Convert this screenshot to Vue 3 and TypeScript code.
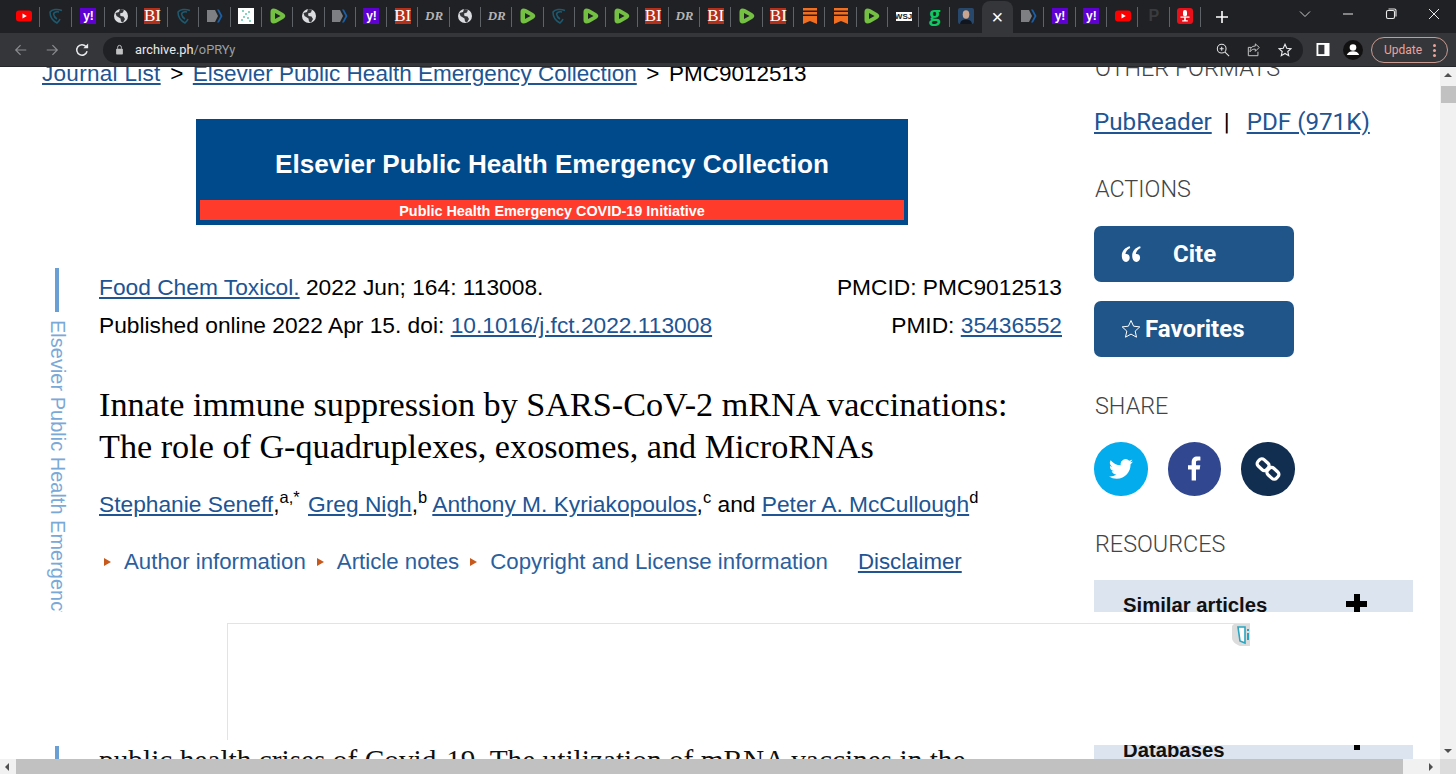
<script setup lang="ts">
type TabKind = 'yt' | 'shield' | 'yahoo' | 'globe' | 'bi' | 'doc' | 'dots' | 'rumble' | 'dr' | 'ribbon' | 'wsj' | 'g' | 'face' | 'active' | 'p' | 'mic'

const tabs: TabKind[] = [
  'yt', 'shield', 'yahoo', 'globe', 'bi', 'shield', 'doc', 'dots', 'rumble', 'globe', 'doc', 'yahoo', 'bi', 'dr', 'globe', 'dr',
  'rumble', 'shield', 'rumble', 'rumble', 'bi', 'dr', 'bi', 'rumble', 'bi', 'ribbon', 'ribbon', 'rumble', 'wsj', 'g', 'face', 'active',
  'doc', 'yahoo', 'yahoo', 'yt', 'p', 'mic'
]

const authors = [
  { name: 'Stephanie Seneff', sup: 'a,*', sep: ',' },
  { name: 'Greg Nigh', sup: 'b', sep: ',' },
  { name: 'Anthony M. Kyriakopoulos', sup: 'c', sep: ',' }
]

const infoLinks = ['Author information', 'Article notes', 'Copyright and License information']
</script>

<template>
  <div class="browser">
    <header class="tabbar">
      <div
        v-for="(tab, i) in tabs"
        :key="i"
        class="tab"
        :class="{ active: tab === 'active', nosep: tab === 'active' || tabs[i + 1] === 'active' }"
      >
        <svg v-if="tab === 'yt'" class="ico" viewBox="0 0 16 16"><rect x="0" y="2.500" width="16" height="11" rx="3" fill="#f00" /><path d="M6.500 5.600 10.800 8l-4.300 2.400z" fill="#fff" /></svg>
        <svg v-else-if="tab === 'shield'" class="ico" viewBox="0 0 16 16" fill="none" stroke="#1d5a70" stroke-width="1.500"><path d="M14 2.500C9 .5 4 1.500 2 4c0 5 2 8.500 7 11 1-1 2.500-2.500 3-4" /><path d="M11 4C8 3.500 6 4.500 5.500 6c.5 2.500 1.500 4 3.500 5" /></svg>
        <span v-else-if="tab === 'yahoo'" class="fav yahoo">y!</span>
        <svg v-else-if="tab === 'globe'" class="ico" viewBox="0 0 16 16"><circle cx="8" cy="8" r="7" fill="#dadce0" /><path d="M2.500 5 6 4l1-3 4 .5-1 3-3 1 .5 2.500 3 .5 1.500 2.500-2 3.500-2-1-.5-3L3.500 8z" fill="#35363a" /></svg>
        <span v-else-if="tab === 'bi'" class="fav bi">BI</span>
        <svg v-else-if="tab === 'doc'" class="ico wide" viewBox="0 0 16 16"><path d="M0 2h8l3 6-3 6H0z" fill="#7d7f83" /><path d="M10 1.500h2l3.500 6.500-3.500 6.500h-2L13.500 8z" fill="#1a5fa8" /></svg>
        <svg v-else-if="tab === 'dots'" class="ico" viewBox="0 0 16 16"><rect width="16" height="16" fill="#fff" /><g fill="#62c6a8"><circle cx="5" cy="3" r="1" /><circle cx="8" cy="6" r="1" /><circle cx="11" cy="4" r="1" /><circle cx="6" cy="9" r="1" /><circle cx="10" cy="10" r="1" /><circle cx="12" cy="13" r="1" /><circle cx="4" cy="12" r="1" /></g></svg>
        <svg v-else-if="tab === 'rumble'" class="ico" viewBox="0 0 16 16"><path d="M3.500 0.500C1.500.5 0.500 2 0.500 4v8c0 2 1 3.500 3 3.500 1 0 2-.3 3-.8l6.500-3.700c3-1.800 3-4.200 0-6L6.500 1.300C5.500.8 4.500.5 3.500.5z" fill="#74c043" /><path d="M5 5l5.500 3L5 11z" fill="#202124" /></svg>
        <span v-else-if="tab === 'dr'" class="fav dr">DR</span>
        <svg v-else-if="tab === 'ribbon'" class="ico" viewBox="0 0 16 16"><path d="M1 0h14v2.500H1zM1 4h14v2.500H1zM1 8h14v8l-7-3-7 3z" fill="#f26f21" /></svg>
        <span v-else-if="tab === 'wsj'" class="fav wsj">WSJ</span>
        <span v-else-if="tab === 'g'" class="fav gg">g</span>
        <svg v-else-if="tab === 'face'" class="ico" viewBox="0 0 16 16"><rect width="16" height="16" rx="2" fill="#27476b" /><ellipse cx="8" cy="6.500" rx="3.300" ry="4.200" fill="#c9a58f" /><path d="M2 16c.5-3.500 3-4.500 6-4.500s5.500 1 6 4.500z" fill="#10161f" /></svg>
        <span v-else-if="tab === 'active'" class="close">×</span>
        <span v-else-if="tab === 'p'" class="fav pp">P</span>
        <svg v-else-if="tab === 'mic'" class="ico" viewBox="0 0 16 16"><rect width="16" height="16" rx="3" fill="#e8101a" /><rect x="6" y="2" width="4" height="6.500" rx="2" fill="#fff" /><path d="M3.500 8.500h9v1.200h-3.700v2.500h2v1.200h-5.600v-1.200h2V9.700H3.500z" fill="#fff" /></svg>
      </div>
      <svg class="plus" viewBox="0 0 12 12" fill="none" stroke="#fff" stroke-width="1.600"><path d="M6 0v12M0 6h12" /></svg>
      <div class="win-controls">
        <svg viewBox="0 0 12 12" fill="none" stroke="#c8c9cb" stroke-width="1"><path d="M1 3.500 6 8.500l5-5" /></svg>
        <svg viewBox="0 0 12 12" fill="none" stroke="#e8e8e8" stroke-width="1"><path d="M1 6h10" /></svg>
        <svg viewBox="0 0 12 12" fill="none" stroke="#e8e8e8" stroke-width="1.100"><rect x="1.500" y="2.500" width="8" height="8" rx="1.500" /><path d="M3.500 1h6a1.500 1.500 0 0 1 1.500 1.500v6" /></svg>
        <svg viewBox="0 0 12 12" fill="none" stroke="#e8e8e8" stroke-width="1"><path d="M1 1l10 10M11 1 1 11" /></svg>
      </div>
    </header>

    <div class="toolbar">
      <svg class="nav" viewBox="0 0 16 16" fill="none" stroke="#8a8c8f" stroke-width="1.400"><path d="M14 8H2M7.500 2.500 2 8l5.500 5.500" /></svg>
      <svg class="nav" viewBox="0 0 16 16" fill="none" stroke="#8a8c8f" stroke-width="1.400"><path d="M2 8h12M8.500 2.500 14 8l-5.500 5.500" /></svg>
      <svg class="nav" viewBox="0 0 16 16" fill="none" stroke="#e8eaed" stroke-width="1.700"><path d="M13.800 9.500A6 6 0 1 1 12.500 4" /><path d="M15 .5v5.500H9.500" fill="#e8eaed" stroke="none" /></svg>
      <div class="omnibox">
        <svg class="lock" viewBox="0 0 12 14"><path d="M3.500 6V4a2.500 2.500 0 0 1 5 0v2" fill="none" stroke="#c0c1c3" stroke-width="1.300" /><rect x="1.500" y="6" width="9" height="7.500" rx="1" fill="#c0c1c3" /></svg>
        <span class="url">archive.ph<span class="url-path">/oPRYy</span></span>
        <span class="spacer"></span>
        <svg class="omni-ico" viewBox="0 0 16 16" fill="none" stroke="#e0e1e3" stroke-width="1.200"><circle cx="6.500" cy="6.500" r="5" /><path d="M10.300 10.300 15 15M6.500 4.200v4.600M4.200 6.500h4.600" /></svg>
        <svg class="omni-ico" viewBox="0 0 16 16" fill="none" stroke="#c9cacc" stroke-width="1.100"><path d="M14 5 9.500 1v2.500C5 3.500 3.500 6.500 3.500 10c1.500-2.500 3.500-3 6-3v2.500z" /><path d="M5 5H1.500v9.500h11V10" /></svg>
        <svg class="omni-ico" viewBox="0 0 16 16" fill="none" stroke="#e8eaed" stroke-width="1.300"><path d="m8 1.500 2 4.500 4.800.5-3.600 3.200 1 4.800L8 12l-4.200 2.500 1-4.800L1.200 6.500 6 6z" /></svg>
      </div>
      <svg class="panel" viewBox="0 0 14 14"><rect width="14" height="14" fill="#fff" /><rect x="2" y="2" width="6.500" height="10" fill="#35363a" /></svg>
      <svg class="avatar" viewBox="0 0 20 20"><circle cx="10" cy="10" r="10" fill="#111" /><circle cx="10" cy="7.500" r="3.300" fill="#fff" /><path d="M3.800 15c1-3 3.500-3.800 6.200-3.800s5.200.8 6.200 3.800z" fill="#fff" /></svg>
      <div class="update">
        <span>Update</span>
        <i></i>
      </div>
    </div>

    <div class="page">
      <main class="viewport">
        <div class="content">
          <nav class="crumbs">
            <a class="first">Journal List</a><span class="gt">&gt;</span><a>Elsevier Public Health Emergency Collection</a><span class="gt">&gt;</span><span>PMC9012513</span>
          </nav>
          <div class="banner">
            <h2>Elsevier Public Health Emergency Collection</h2>
            <p>Public Health Emergency COVID-19 Initiative</p>
          </div>
          <div class="article-row">
            <aside class="rail">
              <span class="rail-bar"></span>
              <span class="rail-text">Elsevier Public Health Emergency Collection</span>
              <span class="rail-bar"></span>
            </aside>
            <article class="article">
              <div class="cite-row">
                <div><a>Food Chem Toxicol.</a> 2022 Jun; 164: 113008.</div>
                <div>PMCID: PMC9012513</div>
              </div>
              <div class="cite-row second">
                <div>Published online 2022 Apr 15. doi: <a>10.1016/j.fct.2022.113008</a></div>
                <div>PMID: <a>35436552</a></div>
              </div>
              <h1>Innate immune suppression by SARS-CoV-2 mRNA vaccinations:<br />The role of G-quadruplexes, exosomes, and MicroRNAs</h1>
              <div class="authors">
                <template v-for="a in authors" :key="a.name">
                  <a>{{ a.name }}</a>{{ a.sep }}<sup>{{ a.sup }}</sup>{{ ' ' }}
                </template>
                and <a>Peter A. McCullough</a><sup>d</sup>
              </div>
              <div class="info">
                <span v-for="item in infoLinks" :key="item" class="info-item"><i class="tri"></i>{{ item }}</span>
                <a class="disclaimer">Disclaimer</a>
              </div>
              <p class="abstract">public health crises of Covid-19. The utilization of mRNA vaccines in the</p>
            </article>
          </div>
        </div>

        <aside class="side">
          <h3 class="other">OTHER FORMATS</h3>
          <div class="formats"><a>PubReader</a><span class="pipe">|</span><a>PDF (971K)</a></div>
          <h3 class="actions">ACTIONS</h3>
          <button class="btn cite">
            <svg viewBox="0 0 20 16" preserveAspectRatio="none" fill="#fff"><path d="M8.800 1C4 2.300 .8 5 .8 9.600c0 3.200 1.700 5.400 4.300 5.400 2.200 0 3.600-1.600 3.600-3.600 0-2.100-1.400-3.500-3.300-3.500-.4 0-.8.100-1 .2.300-2.300 2.200-4.300 4.800-5.400zM19.200 1c-4.800 1.300-8 4-8 8.600 0 3.200 1.700 5.400 4.300 5.400 2.200 0 3.600-1.600 3.600-3.600 0-2.100-1.400-3.500-3.300-3.500-.4 0-.8.100-1 .2.300-2.300 2.200-4.300 4.800-5.400z" /></svg>
            <span>Cite</span>
          </button>
          <button class="btn fav-btn">
            <svg viewBox="0 0 20 20" fill="none" stroke="#fff" stroke-width="1"><path d="m10 1.500 2.600 5.700 6.200.7-4.600 4.200 1.300 6.100L10 15.100l-5.500 3.100 1.300-6.100L1.200 7.900l6.200-.7z" /></svg>
            <span>Favorites</span>
          </button>
          <h3 class="share">SHARE</h3>
          <div class="share-row">
            <span class="circle tw">
              <svg viewBox="0 0 24 24" fill="#fff"><path d="M23.950 4.570a10 10 0 0 1-2.830.77 4.960 4.960 0 0 0 2.160-2.720 9.900 9.900 0 0 1-3.130 1.190 4.920 4.920 0 0 0-8.390 4.490A14 14 0 0 1 1.670 3.150a4.920 4.920 0 0 0 1.520 6.570 4.900 4.900 0 0 1-2.230-.61v.06a4.920 4.920 0 0 0 3.950 4.830 5 5 0 0 1-2.220.08 4.940 4.940 0 0 0 4.600 3.420A9.870 9.870 0 0 1 0 19.540a13.940 13.940 0 0 0 7.550 2.210c9.050 0 14-7.500 14-13.980 0-.21 0-.42-.02-.63a9.940 9.940 0 0 0 2.420-2.570z" /></svg>
            </span>
            <span class="circle fb">
              <svg viewBox="0 0 14 24" fill="#fff"><path d="M9 24V13h3.700l.6-4.300H9V6c0-1.250.35-2.100 2.150-2.100h2.250V.15C13 .1 11.700 0 10.200 0 6.900 0 4.650 2 4.650 5.700v3H1V13h3.650v11z" /></svg>
            </span>
            <span class="circle ln">
              <svg viewBox="0 0 24 24" fill="none" stroke="#fff" stroke-width="3"><rect x="2" y="4" width="11" height="8" rx="3" transform="rotate(42 7.500 8)" /><rect x="11" y="12" width="11" height="8" rx="3" transform="rotate(42 16.500 16)" /></svg>
            </span>
          </div>
          <h3 class="resources">RESOURCES</h3>
          <div class="acc"><span>Similar articles</span><b class="acc-plus"></b></div>
          <div class="acc databases"><span>Databases</span><b class="acc-plus"></b></div>
        </aside>

        <!-- banner ad that sits on top of the scrolled page -->
        <div class="overlay">
          <div class="ad-frame">
            <svg class="ad-badge" viewBox="0 0 18 22"><path d="M18 0H2L0 2v12c0 3 3 6 8 8h10z" fill="#dcdcdc" /><path d="M6 3h7v16l-5-2z" fill="#fff" stroke="#2aa5c0" stroke-width="1.600" /><path d="M15 9h2v7h-2zM15 5h2v2h-2z" fill="#2aa5c0" /></svg>
          </div>
        </div>
      </main>
      <div class="vscroll">
        <i class="arrow up"></i>
        <span class="vthumb"></span>
        <i class="arrow down"></i>
      </div>
      <div class="hscroll">
        <i class="arrow left"></i>
        <span class="hthumb"></span>
        <i class="arrow right"></i>
      </div>
      <div class="corner"></div>
    </div>
  </div>
</template>

<style>
html,
body {
  margin: 0;
  overflow: hidden;
  background: #fff;
}
</style>

<style scoped>
.browser {
  width: 1456px;
  height: 774px;
  display: flex;
  flex-direction: column;
  overflow: hidden;
  font-family: "Liberation Sans", Arial, sans-serif;
}

/* tab strip */
.tabbar {
  height: 33px;
  background: #202124;
  display: flex;
  align-items: center;
  padding-left: 8px;
  flex: none;
}

.tab {
  width: 31.300px;
  height: 33px;
  flex: none;
  display: flex;
  align-items: center;
  justify-content: center;
  position: relative;
  padding-bottom: 1px;
  box-sizing: border-box;
}

.tab:nth-child(-n + 4) {
  width: 32.200px;
}

.tab::after {
  content: "";
  position: absolute;
  right: 0;
  top: 7px;
  height: 20px;
  width: 1px;
  background: #5f6368;
}

.tab.nosep::after {
  display: none;
}

.tab.active {
  background: #35363a;
  border-radius: 8px 8px 0 0;
  margin-top: 1px;
  height: 32px;
}

.ico {
  width: 16px;
  height: 16px;
}

.fav {
  width: 16px;
  height: 16px;
  display: flex;
  align-items: center;
  justify-content: center;
}

.yahoo {
  background: #5f01d1;
  color: #fff;
  font: 700 12px "Liberation Sans", sans-serif;
}

.bi {
  background: #b5301a;
  color: #fff;
  font: 400 17px "Liberation Serif", serif;
}

.dr {
  color: #b4b4b4;
  font: italic 700 13px "Liberation Serif", serif;
}

.wsj {
  background: #fff;
  height: 9px;
  color: #222;
  font: 700 8px "Liberation Sans", sans-serif;
}

.gg {
  color: #10c763;
  font: 700 20px "Open Sans", sans-serif;
  padding-bottom: 5px;
  box-sizing: border-box;
}

.pp {
  color: #3a3b3e;
  font: 700 16px "Liberation Sans", sans-serif;
}

.close {
  color: #fff;
  font: 400 20px/1 "Liberation Sans", sans-serif;
}

.plus {
  width: 12px;
  height: 12px;
  margin-left: 15px;
}

.win-controls {
  margin-left: auto;
  display: flex;
  align-items: center;
  gap: 31px;
  padding-right: 16px;
  padding-bottom: 5px;
}

.win-controls svg {
  width: 12px;
  height: 12px;
}

/* url bar */
.toolbar {
  height: 34px;
  background: #35363a;
  border-bottom: 1px solid #26272a;
  box-sizing: border-box;
  display: flex;
  align-items: center;
  padding-left: 14px;
  flex: none;
}

.nav {
  width: 14px;
  height: 14px;
  margin-right: 16.500px;
}

.omnibox {
  margin-left: -2.500px;
  width: 1200px;
  height: 26px;
  border-radius: 13px;
  background: #202124;
  display: flex;
  align-items: center;
  padding: 0 10px 0 10px;
  box-sizing: border-box;
  flex: none;
}

.lock {
  width: 9px;
  height: 11px;
  margin-right: 11.500px;
  margin-left: 1.500px;
}

.url {
  font: 12.800px Roboto, sans-serif;
  color: #e8eaed;
}

.url-path {
  color: #9aa0a6;
}

.spacer {
  flex: 1;
}

.omni-ico {
  width: 14px;
  height: 14px;
  margin-left: 16px;
  margin-right: 1px;
}

.panel {
  width: 14px;
  height: 13px;
  margin-left: 13px;
}

.avatar {
  width: 20px;
  height: 20px;
  margin-left: 13px;
}

.update {
  margin-left: 8px;
  width: 77px;
  height: 26px;
  box-sizing: border-box;
  border: 1px solid #c99a90;
  border-radius: 13px;
  color: #e8a49c;
  font: 12px Roboto, sans-serif;
  display: flex;
  align-items: center;
  padding-left: 12px;
  position: relative;
}

.update i {
  position: absolute;
  right: 11px;
  top: 6px;
  width: 3px;
  height: 3px;
  border-radius: 50%;
  background: #e8a49c;
  box-shadow: 0 5px 0 #e8a49c, 0 10px 0 #e8a49c;
}

/* page area */
.page {
  flex: 1;
  min-height: 0;
  display: grid;
  grid-template-columns: 1440px 16px;
  grid-template-rows: 1fr 15px;
  background: #fff;
}

.viewport {
  position: relative;
  overflow: hidden;
  display: flex;
  align-items: flex-start;
}

a {
  color: #205493;
  text-decoration: underline;
  text-underline-offset: 2px;
}

.content {
  width: 1062px;
  margin-top: -8px;
  padding-left: 42px;
  box-sizing: border-box;
  flex: none;
  color: #000;
  font-size: 22.750px;
}

.crumbs {
  height: 29px;
  line-height: 29px;
  white-space: nowrap;
  font-size: 22.500px;
}

.crumbs .first {
  letter-spacing: 0.300px;
}

.gt {
  margin: 0 9.500px;
}

.banner {
  margin: 31px 0 0 154px;
  width: 712px;
  height: 106px;
  background: #004a8c;
  box-sizing: border-box;
  padding: 0 4px 5px;
  display: flex;
  flex-direction: column;
  color: #fff;
  font-weight: 700;
}

.banner h2 {
  margin: 0;
  flex: 1;
  display: flex;
  align-items: center;
  justify-content: center;
  font-size: 26.100px;
  padding-top: 9px;
}

.banner p {
  margin: 0;
  height: 20px;
  line-height: 22px;
  background: #ff3b2b;
  text-align: center;
  font-size: 14.400px;
}

.article-row {
  display: flex;
  margin-top: 43px;
}

.rail {
  width: 57px;
  flex: none;
  display: flex;
  flex-direction: column;
  align-items: flex-start;
  overflow: hidden;
}

.rail-bar {
  width: 4px;
  height: 44px;
  background: #6a9fd6;
  flex: none;
  margin-left: 13px;
}

.rail-text {
  writing-mode: vertical-rl;
  color: #7aa9d8;
  font-size: 20px;
  margin: 8px 0;
  margin-left: 4px;
  height: 418px;
  overflow: hidden;
  white-space: nowrap;
  flex: none;
}

.article {
  width: 963px;
  flex: none;
}

.cite-row {
  display: flex;
  justify-content: space-between;
  line-height: 38px;
  height: 38px;
}

h1 {
  margin: 40px 0 0;
  font: 400 34.200px/42px "Liberation Serif", serif;
  color: #000;
  white-space: nowrap;
}

.authors {
  margin-top: 17px;
  line-height: 38px;
  white-space: nowrap;
}

sup {
  font-size: 16.500px;
  line-height: 0;
  vertical-align: 9px;
}

.authors sup:first-of-type {
  padding-right: 2px;
}

.info {
  margin-top: 20px;
  line-height: 38px;
  color: #2b5f9e;
  font-size: 22.250px;
  display: flex;
  white-space: nowrap;
}

.info-item {
  display: flex;
  align-items: center;
  margin-left: 5px;
  margin-right: 6px;
}

.tri {
  width: 0;
  height: 0;
  border-left: 7px solid #c8591d;
  border-top: 4px solid transparent;
  border-bottom: 4px solid transparent;
  margin-right: 13px;
}

.disclaimer {
  margin-left: 24px;
}

.abstract {
  margin: 160px 0 0;
  font: 29.350px/38px "Liberation Serif", serif;
  color: #111;
  white-space: nowrap;
}

/* right column */
.side {
  margin-left: 32px;
  width: 319px;
  flex: none;
  margin-top: -13px;
  color: #444;
}

h3 {
  margin: 0;
  padding-left: 1px;
  font: 300 23.400px/28px Roboto, sans-serif;
  color: #444;
}

.formats {
  margin-top: 26px;
  font: 400 24.200px/28px Roboto, sans-serif;
  white-space: nowrap;
  color: #000;
}

.formats a {
  color: #205493;
}

.pipe {
  margin: 0 17px 0 12px;
}

.actions {
  margin-top: 39px;
}

.btn {
  display: flex;
  align-items: center;
  width: 200px;
  height: 56px;
  border: 0;
  border-radius: 7px;
  background: #20558a;
  color: #fff;
  font: 700 24px Roboto, sans-serif;
  padding: 0 0 0 27px;
  box-sizing: border-box;
}

.cite {
  margin-top: 23px;
  gap: 32px;
}

.cite svg {
  width: 20px;
  height: 18px;
}

.fav-btn {
  margin-top: 19px;
  gap: 4px;
}

.fav-btn svg {
  width: 20px;
  height: 20px;
}

.share {
  margin-top: 35px;
}

.share-row {
  margin-top: 22px;
  display: flex;
  gap: 20px;
}

.circle {
  width: 53.500px;
  height: 53.500px;
  border-radius: 50%;
  display: flex;
  align-items: center;
  justify-content: center;
}

.tw {
  background: #02aced;
}

.tw svg {
  width: 24px;
  height: 24px;
}

.fb {
  background: #31478f;
}

.fb svg {
  width: 14px;
  height: 25px;
}

.ln {
  background: #112e51;
}

.ln svg {
  width: 26px;
  height: 26px;
}

.resources {
  margin-top: 34px;
}

.acc {
  margin-top: 22px;
  height: 56px;
  background: #dce4ef;
  display: flex;
  justify-content: space-between;
  padding: 11px 46px 0 29px;
  box-sizing: border-box;
  font: 700 20.300px/28px "Liberation Sans", sans-serif;
  color: #111;
}

.acc-plus {
  width: 21px;
  height: 21px;
  margin-top: 3px;
  background:
    linear-gradient(#000, #000) center / 100% 6px no-repeat,
    linear-gradient(#000, #000) center / 6px 100% no-repeat;
}

.databases {
  margin-top: 89px;
}

.databases .acc-plus {
  margin-top: -7px;
}

.overlay {
  position: absolute;
  left: 0;
  right: 0;
  top: 545px;
  height: 133px;
  background: #fff;
  padding: 11px 0 0 227px;
  box-sizing: border-box;
}

.ad-frame {
  width: 1023px;
  height: 117px;
  box-sizing: border-box;
  border-top: 1px solid #e3e3e3;
  border-left: 1px solid #e3e3e3;
  position: relative;
}

.ad-badge {
  position: absolute;
  right: 0;
  top: 0;
  width: 18px;
  height: 22px;
}

/* scrollbars */
.vscroll {
  background: #f1f1f1;
  grid-row: 1;
  grid-column: 2;
  display: flex;
  flex-direction: column;
  align-items: center;
  padding: 6px 0;
  box-sizing: border-box;
}

.vthumb {
  width: 15px;
  height: 17px;
  margin-top: 9px;
  background: #c1c1c1;
}

.hscroll {
  grid-row: 2;
  grid-column: 1;
  background: #f1f1f1;
  display: flex;
  align-items: center;
  padding: 0 5px;
  box-sizing: border-box;
}

.hthumb {
  margin-left: 7px;
  width: 1387px;
  height: 15px;
  background: #c1c1c1;
}

.corner {
  background: #dcdcdc;
  grid-row: 2;
  grid-column: 2;
}

.arrow {
  width: 0;
  height: 0;
  display: block;
  border: 4px solid transparent;
}

.arrow.up {
  border-top: 0;
  border-bottom-color: #505050;
}

.arrow.down {
  border-bottom: 0;
  border-top-color: #505050;
  margin-top: auto;
}

.arrow.left {
  border-left: 0;
  border-right-color: #505050;
}

.arrow.right {
  border-right: 0;
  border-left-color: #505050;
  margin-left: auto;
  margin-right: 2px;
}
</style>
